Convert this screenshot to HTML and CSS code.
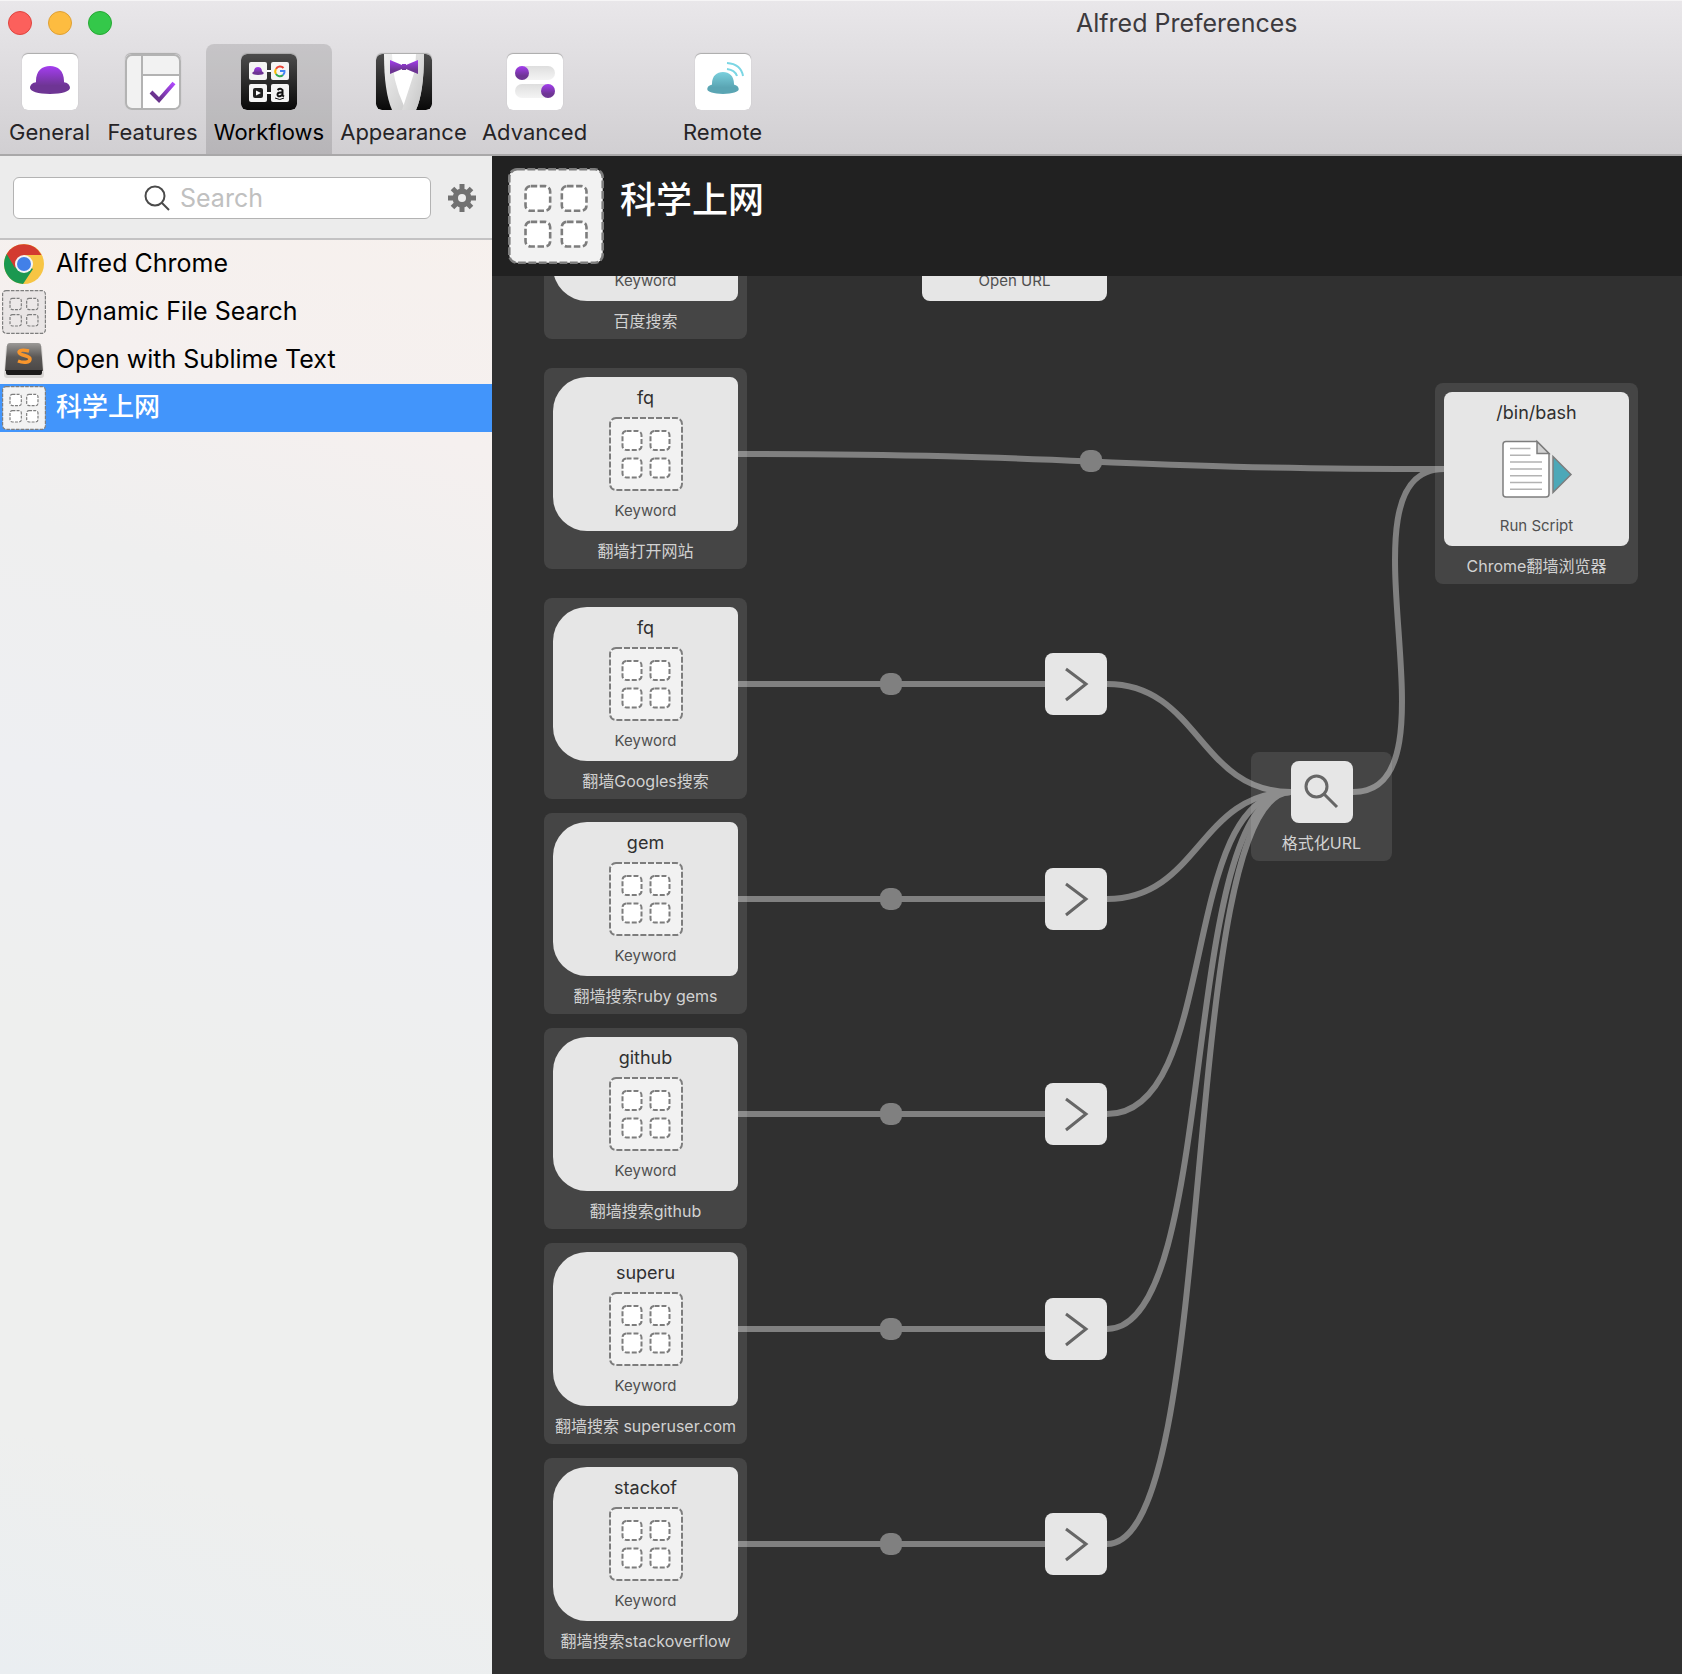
FILE: index.html
```html
<!DOCTYPE html>
<html lang="en">
<head>
<meta charset="utf-8">
<title>Alfred Preferences</title>
<link rel="stylesheet" href="styles.css">
</head>
<body>
<svg class="defs" aria-hidden="true">
  <defs>
    <linearGradient id="purple" x1="0" y1="0" x2="0" y2="1"><stop offset="0" stop-color="#a43df0"/><stop offset=".7" stop-color="#6e3594"/></linearGradient>
    <linearGradient id="tick" x1="1" y1="0" x2="0" y2="1"><stop offset="0" stop-color="#b048ff"/><stop offset=".8" stop-color="#69338c"/></linearGradient>
    <linearGradient id="teal" x1="0" y1="0" x2="0" y2="1"><stop offset="0" stop-color="#7bd0dd"/><stop offset=".7" stop-color="#5aa5b3"/></linearGradient>
    <linearGradient id="dark" x1="0" y1="0" x2="0" y2="1"><stop offset="0" stop-color="#4c4c4c"/><stop offset="1" stop-color="#080808"/></linearGradient>
    <linearGradient id="key" x1="0" y1="0" x2="0" y2="1"><stop offset="0" stop-color="#9b9997"/><stop offset=".5" stop-color="#5b5856"/><stop offset="1" stop-color="#4a4746"/></linearGradient>
    <linearGradient id="lapel" x1="0" y1="0" x2="1" y2="1"><stop offset="0" stop-color="#f1f1f1"/><stop offset="1" stop-color="#c4c4c4"/></linearGradient>
    <linearGradient id="pill" x1="0" y1="0" x2="0" y2="1"><stop offset="0" stop-color="#dedede"/><stop offset="1" stop-color="#f4f4f4"/></linearGradient>
    <symbol id="hat" viewBox="0 0 40 28"><path d="M6 20V15C6 5 12 0 20 0s14 5 14 15v5z M0 22c0-4 4-6 8-6h24c4 0 8 2 8 6 0 3-8 6-20 6S0 25 0 22z"/></symbol>
    <symbol id="grid" viewBox="0 0 74 74">
      <rect class="frame" x="1" y="1" width="72" height="72" rx="6"/>
      <rect class="cell" x="13.500" y="14" width="19" height="19" rx="4"/>
      <rect class="cell" x="41.500" y="14" width="19" height="19" rx="4"/>
      <rect class="cell" x="13.500" y="41.500" width="19" height="19" rx="4"/>
      <rect class="cell" x="41.500" y="41.500" width="19" height="19" rx="4"/>
    </symbol>
  </defs>
</svg>

<header class="titlebar">
  <div class="title-row">
    <div class="lights"><button class="light red" aria-label="Close"></button><button class="light amber" aria-label="Minimise"></button><button class="light green" aria-label="Zoom"></button></div>
    <h1 class="window-title">Alfred Preferences</h1>
  </div>
  <nav class="tabs">
    <button class="tab general">
      <svg class="tab-icon" viewBox="0 0 56 56"><rect width="56" height="56" rx="6" fill="#fff"/><use href="#hat" x="8" y="12" width="40" height="28" fill="url(#purple)"/></svg>
      <span>General</span>
    </button>
    <button class="tab features">
      <svg class="tab-icon" viewBox="0 0 56 56"><rect x="1" y="1" width="54" height="54" rx="6" fill="#f2f2f2" stroke="#b3b3b3" stroke-width="2"/><path d="M17 22h37v26q0 6-6 6H17z" fill="#fff"/><path d="M17 2v52M17 21h37" stroke="#b3b3b3" stroke-width="2"/><path d="M26 38l8 8 15-17" fill="none" stroke="url(#tick)" stroke-width="4"/></svg>
      <span>Features</span>
    </button>
    <button class="tab workflows selected">
      <svg class="tab-icon" viewBox="0 0 56 56"><rect width="56" height="56" rx="6" fill="url(#dark)"/><path d="M24 17h8M24 39h8" stroke="#fff" stroke-width="2"/><g fill="#f5f5f5"><rect x="8" y="8" width="18" height="18" rx="2"/><rect x="30" y="8" width="18" height="18" rx="2"/><rect x="8" y="30" width="18" height="18" rx="2"/><rect x="30" y="30" width="18" height="18" rx="2"/></g><use href="#hat" x="11" y="13" width="12" height="8" fill="url(#purple)"/>
      <g fill="none" stroke-width="2"><path d="M42.500 14A4.500 4.500 0 0 0 35 15" stroke="#e94335"/><path d="M35 15a4.500 4.500 0 0 0 0 5" stroke="#fbbc05"/><path d="M35 20a4.500 4.500 0 0 0 7 1" stroke="#34a853"/><path d="M42 21q2-2 1.500-4H39" stroke="#4285f4"/></g>
      <rect x="12" y="34" width="10" height="10" rx="2" fill="#222"/><path d="M15 36.500v5l5-2.500z" fill="#fff"/>
      <path d="M36.500 36q3-2.500 5 0v5.500l1.500 1M41.500 38.500q-5-.5-5 2t3 1.500q2-.7 2-2" fill="none" stroke="#111" stroke-width="2"/><path d="M34 44q5 3 9 0" fill="none" stroke="#111"/></svg>
      <span>Workflows</span>
    </button>
    <button class="tab appearance">
      <svg class="tab-icon" viewBox="0 0 56 56"><rect width="56" height="56" rx="6" fill="url(#dark)"/><path d="M8 0h40q0 38-8 56H16Q8 38 8 0z" fill="url(#lapel)"/><path d="M16 0h24q0 26-12 52Q16 26 16 0z" fill="#fff"/><path d="M26 56q6-18 13-40 5-10 1-16h8q0 38-8 56z" fill="url(#lapel)"/><path d="M14 6l12 5V10h4v1l12-5v14l-12-5v1h-4v-1l-12 5z" fill="url(#purple)"/></svg>
      <span>Appearance</span>
    </button>
    <button class="tab advanced">
      <svg class="tab-icon" viewBox="0 0 56 56"><rect width="56" height="56" rx="6" fill="#fff"/><rect x="8" y="12" width="40" height="14" rx="7" fill="url(#pill)"/><circle cx="15" cy="19" r="7" fill="url(#purple)"/><rect x="8" y="30" width="40" height="14" rx="7" fill="url(#pill)"/><circle cx="41" cy="37" r="7" fill="url(#purple)"/></svg>
      <span>Advanced</span>
    </button>
    <button class="tab remote">
      <svg class="tab-icon" viewBox="0 0 56 56"><rect width="56" height="56" rx="6" fill="#fff"/><use href="#hat" x="12" y="18" width="32" height="22" fill="url(#teal)"/><path d="M32 9q14 1 16 13M32 15q8 1 10 7" fill="none" stroke="#7bd6e4" stroke-width="2"/></svg>
      <span>Remote</span>
    </button>
  </nav>
</header>

<div class="panes">
  <aside class="sidebar">
    <div class="filter">
      <label class="search">
        <svg class="search-icon" viewBox="0 0 26 26"><circle cx="11" cy="11" r="9.500"/><path d="M18 18l7 7"/></svg>
        <input type="search" placeholder="Search" aria-label="Search">
      </label>
      <button class="gear" aria-label="Settings">
        <svg viewBox="0 0 28 28"><g stroke="#717171" stroke-width="5"><path d="M14 0v28M0 14h28M4.500 4.500l19 19M23.500 4.500l-19 19"/></g><circle cx="14" cy="14" r="9.500" fill="#717171"/><circle cx="14" cy="14" r="4" fill="#ececec"/></svg>
      </button>
    </div>
    <ul class="list">
      <li><button class="row">
        <svg class="row-icon" viewBox="0 0 44 44"><circle cx="22" cy="22" r="20" fill="#f7c544"/><path d="M22 22L4.700 12A20 20 0 0 0 21 42L31 27z" fill="#1a9850"/><path d="M22 22L4.700 12A20 20 0 0 1 39.500 13H22z" fill="#d33b30"/><path d="M4.700 12L13 26l9-13z" fill="#d33b30"/><circle cx="22" cy="22" r="9" fill="#f4f4f4"/><circle cx="22" cy="22" r="7" fill="#4280e8"/></svg>
        <span>Alfred Chrome</span></button></li>
      <li><button class="row">
        <svg class="row-icon muted"><use href="#grid"/></svg>
        <span>Dynamic File Search</span></button></li>
      <li><button class="row">
        <svg class="row-icon" viewBox="0 0 44 44"><path d="M4 8h36l2 29q0 3-3 3H5q-3 0-3-3z" fill="#d9d6d4"/><path d="M8 5h28q3 0 3 3l2 25H3L5 8q0-3 3-3z" fill="url(#key)"/><path d="M4 32h36v3q0 2-2 2H6q-2 0-2-2z" fill="#1c1a1a"/><path d="M27 13q-9-2-10 1c0 4 11 3 11 7 0 4-7 4-12 2" fill="none" stroke="#f9962c" stroke-width="3.500"/></svg>
        <span>Open with Sublime Text</span></button></li>
      <li><button class="row current" aria-current="true">
        <svg class="row-icon"><use href="#grid"/></svg>
        <span lang="zh-CN">科学上网</span></button></li>
    </ul>
  </aside>

  <main class="editor">
    <div class="banner">
      <svg class="banner-icon"><use href="#grid"/></svg>
      <h2 lang="zh-CN">科学上网</h2>
    </div>
    <div class="canvas" lang="zh-CN">
      <svg class="wires" width="1190" height="1398" aria-hidden="true">
        <path d="M246 178C599 178 599 193 952 193"/>
        <path d="M246 408H553M246 623H553M246 838H553M246 1053H553M246 1268H553"/>
        <path d="M615 408C707 408 707 516 799 516"/>
        <path d="M615 623C707 623 707 516 799 516"/>
        <path d="M615 838C729 838 685 516 799 516"/>
        <path d="M615 1053C729 1053 685 516 799 516"/>
        <path d="M615 1268C729 1268 685 516 799 516"/>
        <path d="M861 516C975 516 838 193 952 193"/>
        <g class="knots"><rect x="588" y="174" width="22" height="22" rx="9"/><rect x="388" y="397" width="22" height="22" rx="9"/><rect x="388" y="612" width="22" height="22" rx="9"/><rect x="388" y="827" width="22" height="22" rx="9"/><rect x="388" y="1042" width="22" height="22" rx="9"/><rect x="388" y="1257" width="22" height="22" rx="9"/></g>
      </svg>

      <section class="node" style="left:52px;top:-138px"><div class="card keyword"><h3></h3><svg class="glyph"><use href="#grid"/></svg><p>Keyword</p></div><p class="note">百度搜索</p></section>
      <section class="node bare" style="left:421px;top:-138px"><div class="card"><h3></h3><svg class="glyph"></svg><p>Open URL</p></div></section>
      <section class="node" style="left:52px;top:92px"><div class="card keyword"><h3>fq</h3><svg class="glyph"><use href="#grid"/></svg><p>Keyword</p></div><p class="note">翻墙打开网站</p></section>
      <section class="node" style="left:52px;top:322px"><div class="card keyword"><h3>fq</h3><svg class="glyph"><use href="#grid"/></svg><p>Keyword</p></div><p class="note">翻墙Googles搜索</p></section>
      <section class="node" style="left:52px;top:537px"><div class="card keyword"><h3>gem</h3><svg class="glyph"><use href="#grid"/></svg><p>Keyword</p></div><p class="note">翻墙搜索ruby gems</p></section>
      <section class="node" style="left:52px;top:752px"><div class="card keyword"><h3>github</h3><svg class="glyph"><use href="#grid"/></svg><p>Keyword</p></div><p class="note">翻墙搜索github</p></section>
      <section class="node" style="left:52px;top:967px"><div class="card keyword"><h3>superu</h3><svg class="glyph"><use href="#grid"/></svg><p>Keyword</p></div><p class="note">翻墙搜索 superuser.com</p></section>
      <section class="node" style="left:52px;top:1182px"><div class="card keyword"><h3>stackof</h3><svg class="glyph"><use href="#grid"/></svg><p>Keyword</p></div><p class="note">翻墙搜索stackoverflow</p></section>

      <section class="node" style="left:943px;top:107px"><div class="card"><h3>/bin/bash</h3>
        <svg class="glyph" viewBox="0 0 74 74"><path d="M6 9.500h31l12 12V62q0 3-3 3H6q-3 0-3-3V12.500q0-3 3-3z" fill="#fff" stroke="#7d7d7d" stroke-width="1.500"/><path d="M37 9.500v12h12z" fill="#d2d2d2" stroke="#7d7d7d" stroke-width="1.500"/><path d="M10 16.500h20.500M10 23.300h20.500M10 30h32M10 37h32M10 43.700h32M10 50.500h32M10 57.300h32" stroke="#b3b3b3" stroke-width="1.500"/><path d="M53 24.500v36l18-18z" fill="#4ca8b8" stroke="#7d7d7d" stroke-width="1.500"/></svg>
        <p>Run Script</p></div><p class="note">Chrome翻墙浏览器</p></section>

      <section class="node compact" style="left:759px;top:476px"><svg class="chip" viewBox="0 0 62 62"><circle cx="25.500" cy="25.500" r="10.500"/><path d="M33 33l13 13"/></svg><p class="note">格式化URL</p></section>

      <svg class="chip step" style="left:553px;top:377px" viewBox="0 0 62 62"><path d="M21 16l20 15-20 16"/></svg>
      <svg class="chip step" style="left:553px;top:592px" viewBox="0 0 62 62"><path d="M21 16l20 15-20 16"/></svg>
      <svg class="chip step" style="left:553px;top:807px" viewBox="0 0 62 62"><path d="M21 16l20 15-20 16"/></svg>
      <svg class="chip step" style="left:553px;top:1022px" viewBox="0 0 62 62"><path d="M21 16l20 15-20 16"/></svg>
      <svg class="chip step" style="left:553px;top:1237px" viewBox="0 0 62 62"><path d="M21 16l20 15-20 16"/></svg>
    </div>
  </main>
</div>
</body>
</html>
```
FILE: styles.css
```css
* { box-sizing: border-box; }
body { margin: 0; min-height: 100vh; display: flex; flex-direction: column; overflow-x: hidden; font-family: Inter, "Noto Sans CJK SC", sans-serif; color: #000; background: #303030; }
h1, h2, h3, p, ul { margin: 0; padding: 0; font-weight: 400; }
ul { list-style: none; }
button { border: 0; padding: 0; background: none; font: inherit; color: inherit; }
svg { display: block; }
.defs { position: absolute; width: 0; height: 0; }

.titlebar { height: 156px; display: flex; flex-direction: column; background: linear-gradient(#e9e7ea, #d1cfd2); border-top: 1px solid #f6f5f6; border-bottom: 2px solid #a9a8a9; }
.title-row { display: flex; align-items: center; height: 43px; padding-left: 8px; }
.lights { display: flex; gap: 16px; width: 1068px; }
.light { width: 24px; height: 24px; border-radius: 50%; }
.red { background: #fc605c; border: 1px solid #e0443f; }
.amber { background: #fdbc40; border: 1px solid #dfa035; }
.green { background: #34c84a; border: 1px solid #27a834; }
.window-title { font-size: 25px; line-height: 32px; color: #3c3a3e; white-space: nowrap; }

.tabs { display: flex; flex: 1; }
.tab { display: flex; flex-direction: column; align-items: center; padding-top: 10px; gap: 8px; border-radius: 8px 8px 0 0; font-size: 22px; line-height: 28px; color: #262427; }
.tab-icon { width: 56px; height: 56px; border-radius: 6px; box-shadow: 0 -1px 1px #aaa; }
.general { width: 99px; }
.features { width: 107px; }
.workflows { width: 126px; }
.appearance { width: 143px; }
.advanced { width: 119px; }
.remote { width: 97px; margin-left: 80px; }
.selected { background: rgba(0, 0, 0, .12); color: #000; }

.panes { display: flex; flex: 1; }
.sidebar { width: 492px; flex: none; background: linear-gradient(196deg, #f7f1ed 0, #f5f0ef 18%, #efefef 30%, #eeeff2 45%, #eeefee 60%, #eeefee 85%, #eaeef1 100%); }
.filter { display: flex; align-items: center; gap: 17px; height: 84px; padding: 2px 16px 0 13px; background: #ececec; border-bottom: 2px solid #c3c2c3; }
.search { display: flex; align-items: center; flex: 1; min-width: 0; gap: 10px; height: 42px; padding-left: 130px; background: #fff; border: 1px solid #b3b3b3; border-radius: 6px; }
.search-icon { flex: none; width: 26px; height: 26px; fill: none; stroke: #4a4a4a; stroke-width: 2; }
.search input { flex: 1; min-width: 0; border: 0; padding: 0; outline: 0; background: none; font: inherit; font-size: 25px; line-height: 32px; }
.search input::placeholder { color: #c0c0c0; }
.gear { flex: none; width: 28px; height: 28px; }
.row { display: flex; align-items: center; gap: 10px; width: 100%; height: 48px; padding-left: 2px; font-size: 25px; line-height: 32px; text-align: left; }
.row span { padding-bottom: 2px; }
.row-icon { flex: none; width: 44px; height: 44px; }
.current { background: #4295fb; color: #fff; font-size: 26px; font-weight: 500; }

.frame { fill: var(--frame, #f2f2f2); stroke: #7d7d7d; stroke-width: 2; stroke-dasharray: 6 2; }
.cell { fill: var(--cell, #fff); stroke: #7d7d7d; stroke-width: 2; stroke-dasharray: 5 2; }
.muted { --frame: #e9e5e5; --cell: #ece8e8; }

.editor { flex: 1; min-width: 0; display: flex; flex-direction: column; }
.banner { display: flex; gap: 16px; height: 120px; padding: 12px 16px; background: #212121; color: #fff; }
.banner-icon { flex: none; width: 96px; height: 96px; }
.banner h2 { font-size: 36px; font-weight: 500; line-height: 64px; }
.canvas { position: relative; flex: 1; overflow: hidden; background: #303030; }
.wires { fill: none; stroke: #808080; stroke-width: 6; }
.knots { fill: #808080; stroke: none; }
.node { position: absolute; width: 203px; padding: 9px 9px 8px; border-radius: 8px; background: rgba(255, 255, 255, .1); text-align: center; }
.bare { background: none; }
.card { display: flex; flex-direction: column; align-items: center; height: 154px; padding-top: 9px; border-radius: 8px; background: #e6e6e6; }
.keyword { border-radius: 34px 8px 8px 34px; }
.card h3 { height: 24px; font-size: 18px; line-height: 24px; color: #303030; }
.card p { font-size: 15px; line-height: 20px; color: #505050; }
.glyph { width: 74px; height: 74px; margin: 7px 0 10px; }
.note { margin-top: 10px; font-size: 16px; line-height: 20px; color: #d2d2d2; white-space: nowrap; }
.compact { width: 141px; }
.chip { width: 62px; height: 62px; border-radius: 8px; background: #e6e6e6; fill: none; stroke: #666; stroke-width: 3; }
.compact .chip { margin: 0 auto; }
.step { position: absolute; }
```
